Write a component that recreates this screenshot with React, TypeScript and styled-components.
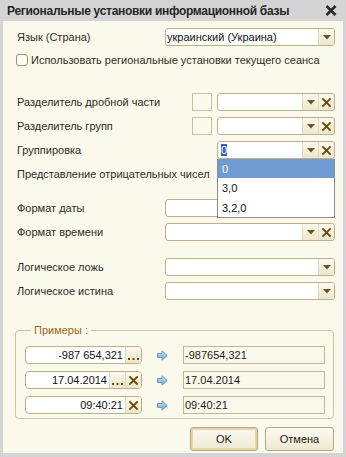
import React from 'react';
import styled, { createGlobalStyle } from 'styled-components';

const GlobalStyle = createGlobalStyle`
  html, body { margin: 0; padding: 0; background: #d4d4d4; }
  body { font-family: "Liberation Sans", Arial, sans-serif; font-size: 11px; color: #2e2d24; }
`;

const Window = styled.div`
  width: 346px;
  height: 457px;
  box-sizing: border-box;
  background: #d4d4d4;
  padding: 0 3px 4px 3px;
  display: flex;
  flex-direction: column;
`;

const TitleBar = styled.div`
  height: 21px;
  flex-shrink: 0;
  display: flex;
  align-items: center;
  justify-content: space-between;
  padding: 0 6px 0 4px;
  font-weight: bold;
  font-size: 12px;
  letter-spacing: -0.3px;
  white-space: nowrap;
  color: #262626;
`;

const Body = styled.div`
  flex: 1;
  background: #fbf9eb;
  padding: 7px 8px 0 12px;
  display: flex;
  flex-direction: column;
`;

const Row = styled.div<{ $mt?: number }>`
  display: grid;
  grid-template-columns: 150px 1fr;
  align-items: center;
  height: 18px;
  margin-top: ${({ $mt }) => $mt ?? 0}px;
`;

const Label = styled.div`
  padding-left: 2px;
  white-space: nowrap;
`;

const CheckRow = styled.label`
  display: flex;
  align-items: center;
  gap: 3px;
  height: 12px;
  margin-top: 8px;
  padding-left: 1px;
  white-space: nowrap;
`;

const CheckBox = styled.span`
  width: 12px;
  height: 12px;
  box-sizing: border-box;
  border: 1px solid #9d9474;
  border-radius: 3px;
  background: #fdfcf5;
`;

const SepCell = styled.div`
  display: flex;
  align-items: center;
  gap: 5px;
  padding-left: 27px;
`;

const Square = styled.div`
  width: 20px;
  height: 18px;
  box-sizing: border-box;
  border: 1px solid #c9c0a0;
  flex-shrink: 0;
`;

const Anchor = styled.div<{ $indent?: number }>`
  position: relative;
  margin-left: ${({ $indent }) => $indent ?? 0}px;
`;

const Field = styled.div<{ $radius?: number }>`
  height: 18px;
  box-sizing: border-box;
  border: 1px solid #bcb08a;
  border-radius: ${({ $radius }) => $radius ?? 3}px;
  background: #ffffff;
  display: flex;
  overflow: hidden;
  flex: 1;
`;

const Value = styled.div<{ $right?: boolean }>`
  flex: 1;
  display: flex;
  align-items: center;
  justify-content: ${({ $right }) => ($right ? 'flex-end' : 'flex-start')};
  padding: 0 ${({ $right }) => ($right ? '2px' : '1px')};
  color: #111;
  white-space: nowrap;
  overflow: hidden;
`;

const Selected = styled.span`
  background: #3560c4;
  color: #ffffff;
  margin-left: 2px;
  line-height: 12px;
`;

const FieldButton = styled.div`
  width: 15px;
  flex-shrink: 0;
  border-left: 1px solid #e2dbbd;
  background: linear-gradient(#fbf9ef, #ece6cc);
  display: flex;
  align-items: center;
  justify-content: center;
`;

const DropList = styled.div`
  position: absolute;
  top: 18px;
  left: 0;
  right: 0;
  z-index: 5;
  background: #ffffff;
  border: 1px solid #8c8c8c;
  border-top: none;
`;

const DropItem = styled.div<{ $active?: boolean; $h: number }>`
  height: ${({ $h }) => $h}px;
  display: flex;
  align-items: center;
  padding-left: 4px;
  background: ${({ $active }) => ($active ? '#6f9bd2' : 'transparent')};
  color: ${({ $active }) => ($active ? '#ffffff' : '#111')};
`;

const GroupBox = styled.fieldset`
  margin: 24px 1px 0 0;
  padding: 9px 8px 4px 9px;
  border: 1px solid #cec39e;
  border-radius: 4px;
  display: flex;
  flex-direction: column;
  gap: 7px;
`;

const Legend = styled.legend`
  margin-left: 6px;
  padding: 0 3px;
  line-height: 13px;
  color: #9a6a0e;
`;

const ExampleRow = styled.div`
  display: grid;
  grid-template-columns: 117px 41px 142px;
  align-items: center;
  height: 18px;
`;

const ArrowCell = styled.div`
  display: flex;
  justify-content: center;
`;

const Output = styled.div`
  height: 18px;
  box-sizing: border-box;
  border: 1px solid #c2b791;
  display: flex;
  align-items: center;
  padding-left: 1px;
  color: #1e1d16;
`;

const Buttons = styled.div`
  display: flex;
  justify-content: flex-end;
  gap: 7px;
  margin: 8px 1px 0 0;
`;

const Button = styled.div<{ $default?: boolean; $w: number }>`
  width: ${({ $w }) => $w}px;
  height: 24px;
  box-sizing: border-box;
  border: 1px solid #b3a77f;
  border-radius: 3px;
  background: linear-gradient(#fdfcf4, #eee8cf);
  box-shadow: ${({ $default }) => ($default ? 'inset 0 0 0 2px #e3d6a6' : 'none')};
  display: flex;
  align-items: center;
  justify-content: center;
  color: #1e1d16;
`;

const DownArrow = () => (
  <svg width="8" height="5" viewBox="0 0 8 5">
    <path d="M0 0 H8 L4 4.5 Z" fill="#6e5416" />
  </svg>
);

const ClearIcon = () => (
  <svg width="9" height="9" viewBox="0 0 9 9">
    <path d="M1 1 L8 8 M8 1 L1 8" stroke="#6a4b02" strokeWidth="1.8" strokeLinecap="square" />
  </svg>
);

const Dots = () => (
  <svg width="11" height="14" viewBox="0 0 11 14">
    <rect x="0" y="10" width="2" height="2" fill="#6a4b02" />
    <rect x="4.5" y="10" width="2" height="2" fill="#6a4b02" />
    <rect x="9" y="10" width="2" height="2" fill="#6a4b02" />
  </svg>
);

const GoArrow = () => (
  <svg width="11" height="11" viewBox="0 0 11 11">
    <defs>
      <linearGradient id="ga" x1="0" y1="0" x2="0" y2="1">
        <stop offset="0" stopColor="#c8e6fa" />
        <stop offset="1" stopColor="#5da8e2" />
      </linearGradient>
    </defs>
    <path d="M0.5 3.5 H5 V0.8 L10.2 5.5 L5 10.2 V7.5 H0.5 Z" fill="url(#ga)" stroke="#7d93a8" strokeWidth="1" />
  </svg>
);

const CloseIcon = () => (
  <svg width="12" height="11" viewBox="0 0 12 11">
    <path d="M1.5 1 L10.5 10 M10.5 1 L1.5 10" stroke="#2a2a2a" strokeWidth="2.6" />
  </svg>
);

const Combo = ({ value, clear = true }: { value?: React.ReactNode; clear?: boolean }) => (
  <Field>
    <Value>{value}</Value>
    <FieldButton><DownArrow /></FieldButton>
    {clear && <FieldButton><ClearIcon /></FieldButton>}
  </Field>
);

export default function App() {
  return (
    <>
      <GlobalStyle />
      <Window>
        <TitleBar>
          <span>Региональные установки информационной базы</span>
          <CloseIcon />
        </TitleBar>
        <Body>
          <Row>
            <Label>Язык (Страна)</Label>
            <Combo value="украинский (Украина)" clear={false} />
          </Row>
          <CheckRow>
            <CheckBox />
            Использовать региональные установки текущего сеанса
          </CheckRow>

          <Row $mt={27}>
            <Label>Разделитель дробной части</Label>
            <SepCell><Square /><Combo /></SepCell>
          </Row>
          <Row $mt={6}>
            <Label>Разделитель групп</Label>
            <SepCell><Square /><Combo /></SepCell>
          </Row>
          <Row $mt={6}>
            <Label>Группировка</Label>
            <Anchor $indent={52}>
              <Combo value={<Selected>0</Selected>} />
              <DropList>
                <DropItem $active $h={19}>0</DropItem>
                <DropItem $h={20}>3,0</DropItem>
                <DropItem $h={19}>3,2,0</DropItem>
              </DropList>
            </Anchor>
          </Row>
          <Row $mt={6}>
            <Label>Представление отрицательных чисел</Label>
            <Anchor $indent={52}><Combo /></Anchor>
          </Row>

          <Row $mt={16}>
            <Label>Формат даты</Label>
            <Combo />
          </Row>
          <Row $mt={6}>
            <Label>Формат времени</Label>
            <Combo />
          </Row>

          <Row $mt={17}>
            <Label>Логическое ложь</Label>
            <Combo clear={false} />
          </Row>
          <Row $mt={6}>
            <Label>Логическое истина</Label>
            <Combo clear={false} />
          </Row>

          <GroupBox>
            <Legend>Примеры :</Legend>
            <ExampleRow>
              <Field $radius={4}>
                <Value $right>-987 654,321</Value>
                <FieldButton><Dots /></FieldButton>
              </Field>
              <ArrowCell><GoArrow /></ArrowCell>
              <Output>-987654,321</Output>
            </ExampleRow>
            <ExampleRow>
              <Field $radius={4}>
                <Value $right>17.04.2014</Value>
                <FieldButton><Dots /></FieldButton>
                <FieldButton><ClearIcon /></FieldButton>
              </Field>
              <ArrowCell><GoArrow /></ArrowCell>
              <Output>17.04.2014</Output>
            </ExampleRow>
            <ExampleRow>
              <Field $radius={4}>
                <Value $right>09:40:21</Value>
                <FieldButton><ClearIcon /></FieldButton>
              </Field>
              <ArrowCell><GoArrow /></ArrowCell>
              <Output>09:40:21</Output>
            </ExampleRow>
          </GroupBox>

          <Buttons>
            <Button $default $w={68}>OK</Button>
            <Button $w={69}>Отмена</Button>
          </Buttons>
        </Body>
      </Window>
    </>
  );
}
